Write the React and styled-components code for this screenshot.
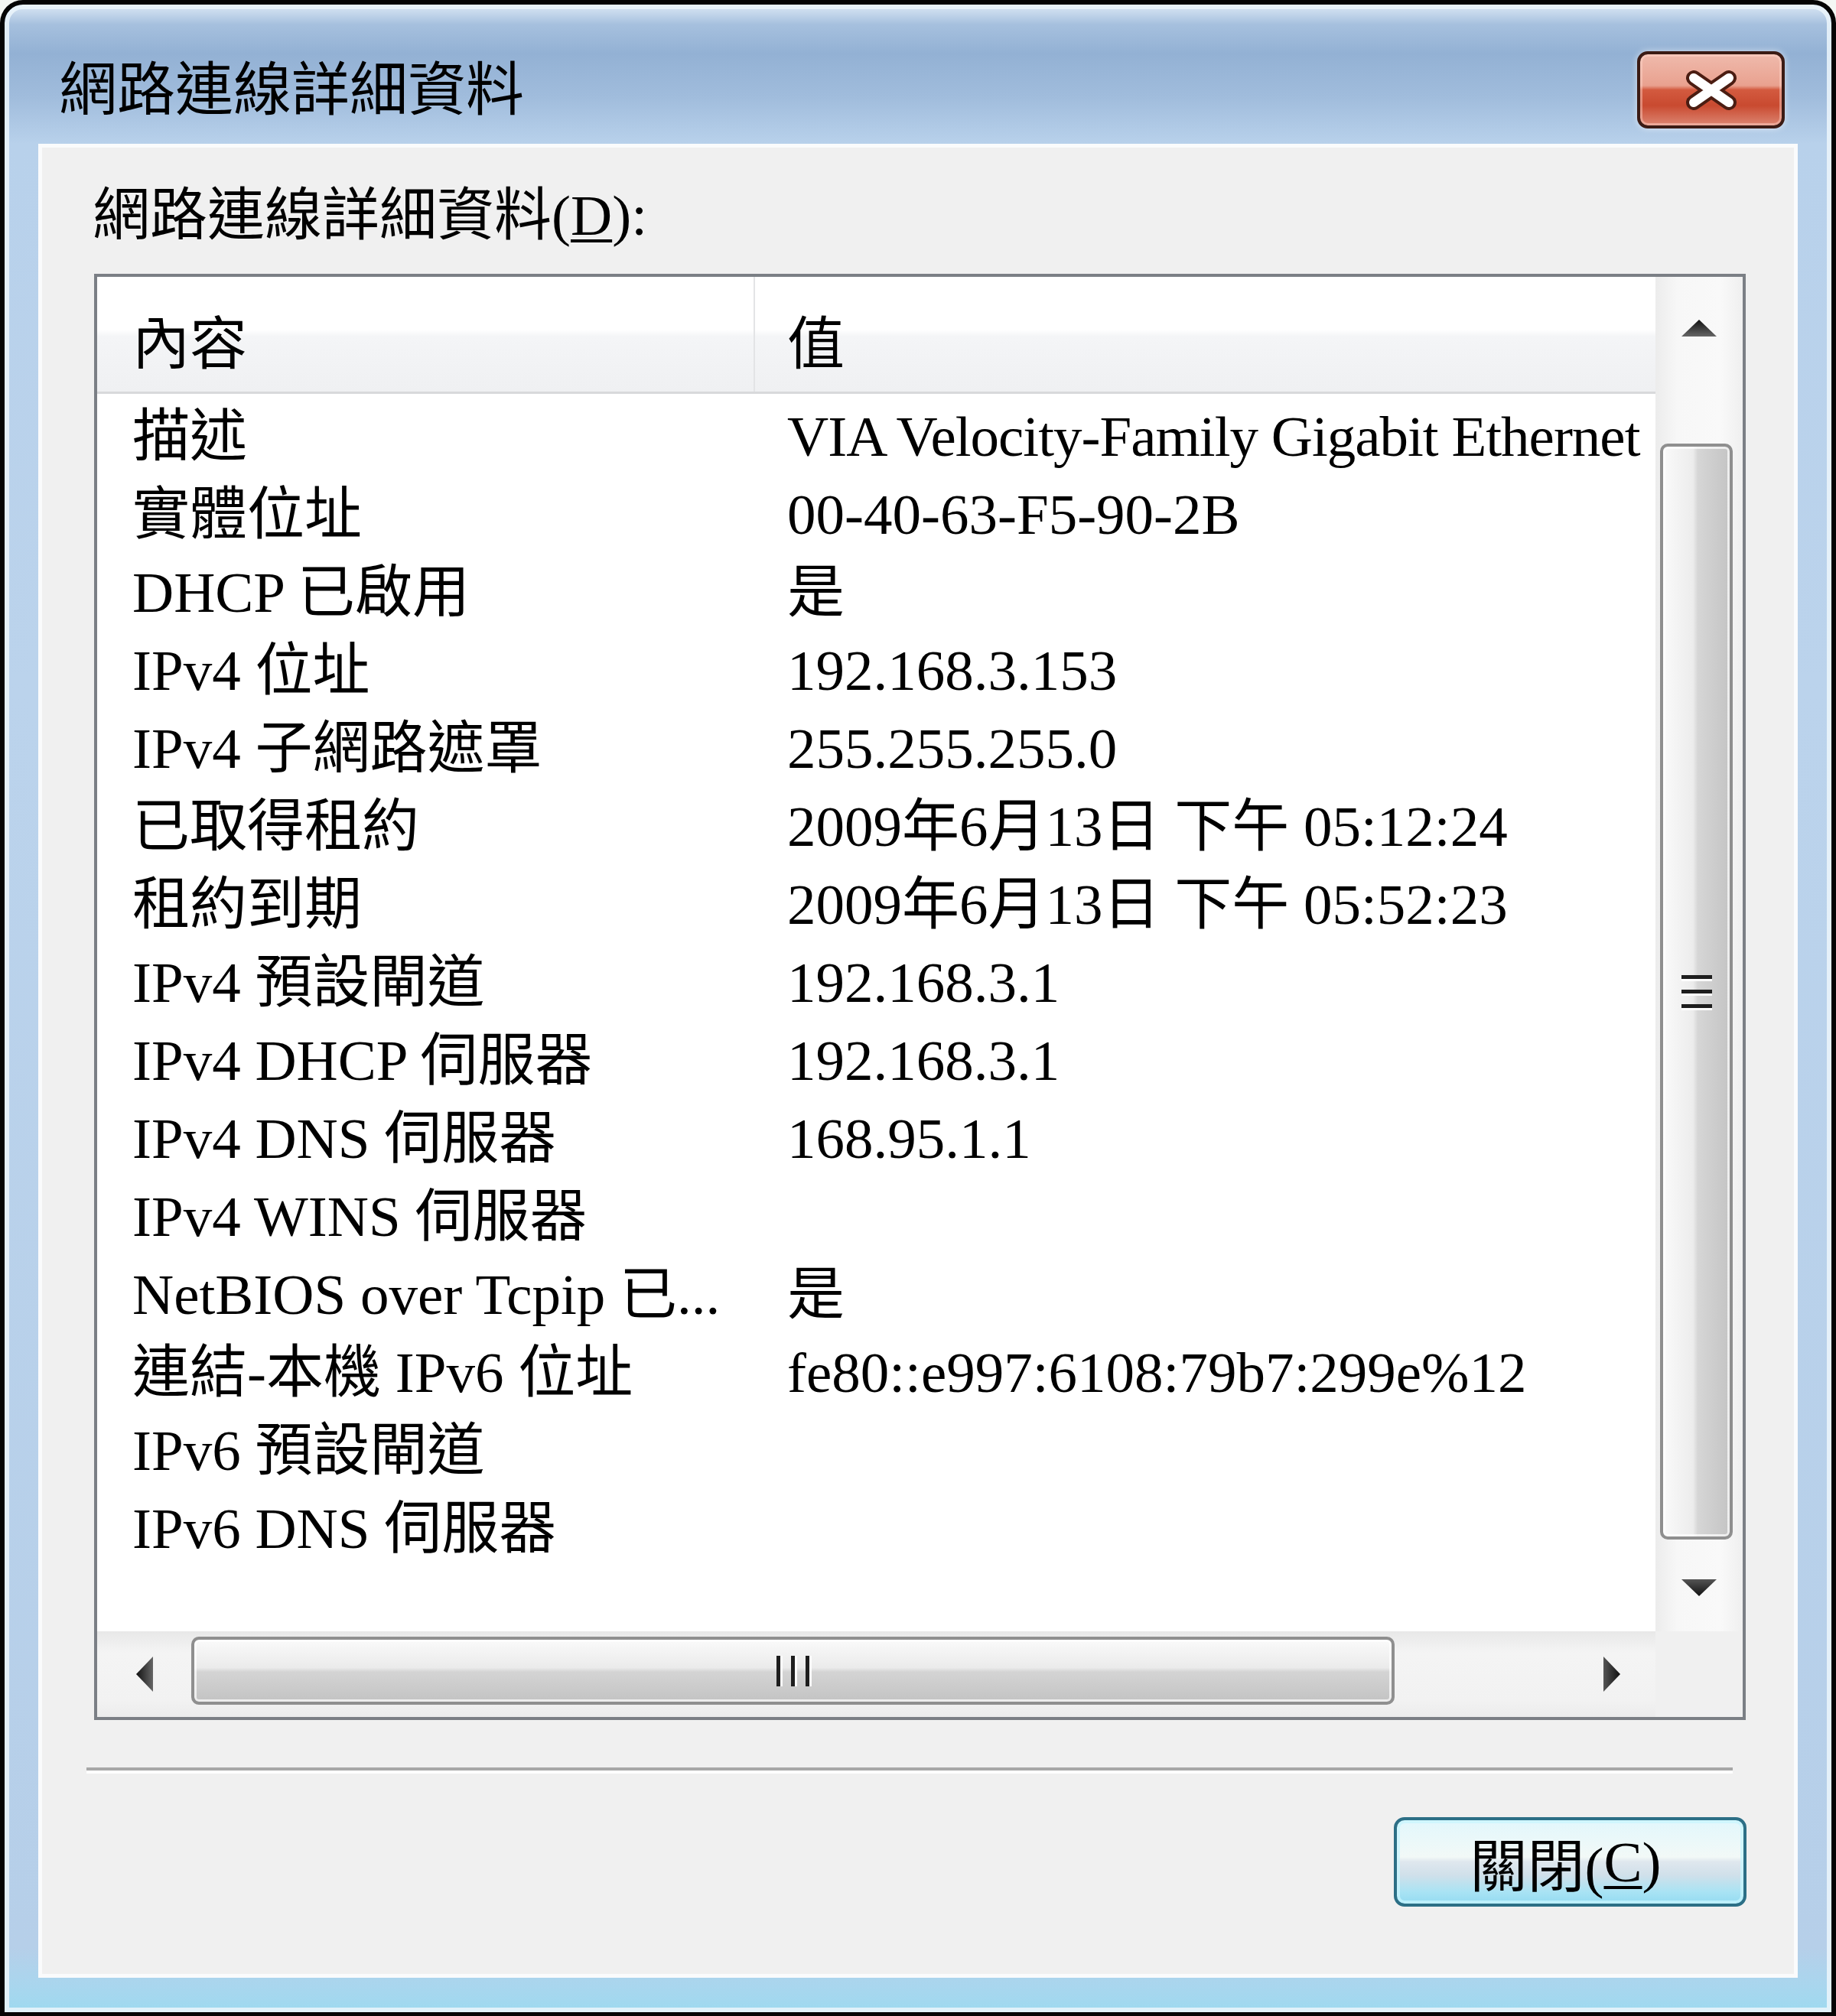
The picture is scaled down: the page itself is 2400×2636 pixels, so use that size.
import React from "react";
import styled, { createGlobalStyle } from "styled-components";

const FONT = `"Liberation Serif", "Noto Sans CJK TC", serif`;

const Global = createGlobalStyle`
  html, body { margin: 0; padding: 0; background: #f4f7f4; }
  body { width: 2400px; height: 2636px; overflow: hidden; }
  #root { width: 2400px; height: 2636px; }
`;

const Window = styled.div`
  box-sizing: border-box;
  width: 2400px;
  height: 2636px;
  display: flex;
  flex-direction: column;
  border: 6px solid #050505;
  border-bottom-width: 5px;
  border-radius: 30px 30px 0 0;
  background: linear-gradient(
    180deg,
    #dbe8f5 0px,
    #a6c0de 26px,
    #93b1d4 64px,
    #a0bcdc 120px,
    #b8d1eb 182px,
    #bbd3ec 900px,
    #b6cfe9 2540px,
    #a9d6ee 2590px,
    #9cdaf0 2631px
  );
  box-shadow: inset 0 0 0 6px rgba(236, 246, 252, 0.85);
  font-family: ${FONT};
  color: #000;
`;

const TitleBar = styled.div`
  flex: none;
  height: 182px;
  display: flex;
  justify-content: space-between;
  align-items: flex-start;
  padding: 0 61px 0 71px;
`;

const Title = styled.div`
  margin-top: 62px;
  font-size: 76px;
  line-height: 100px;
  white-space: nowrap;
`;

const CloseBox = styled.div`
  box-sizing: border-box;
  width: 193px;
  height: 101px;
  margin-top: 61px;
  border: 4px solid #3b1b14;
  border-radius: 14px;
  background: linear-gradient(
    180deg,
    #efbaac 0%,
    #e9a18f 44%,
    #d35a3f 50%,
    #c94a30 72%,
    #dc8571 100%
  );
  box-shadow: inset 0 0 0 3px rgba(255, 215, 205, 0.45), 0 0 8px rgba(255, 255, 255, 0.6);
  display: flex;
  align-items: center;
  justify-content: center;
`;

const Client = styled.div`
  flex: 1;
  margin: 0 44px 45px;
  box-sizing: border-box;
  background: #f0f0f0;
  border: 5px solid #fafbfc;
  display: flex;
  flex-direction: column;
`;

const Label = styled.div`
  height: 100px;
  margin-top: 39px;
  padding-left: 66px;
  font-size: 75px;
  line-height: 100px;
  white-space: nowrap;
`;

const Key = styled.span`
  text-decoration: underline;
  text-decoration-thickness: 4px;
  text-underline-offset: 6px;
`;

const ListBox = styled.div`
  box-sizing: border-box;
  height: 1891px;
  margin: 26px 63px 0 68px;
  border: 4px solid #7b7f85;
  background: #fff;
  display: grid;
  grid-template-columns: 1fr 114px;
  grid-template-rows: 1fr 112px;
  overflow: hidden;
`;

const Pane = styled.div`
  min-width: 0;
  overflow: hidden;
  display: flex;
  flex-direction: column;
`;

const Header = styled.div`
  box-sizing: border-box;
  flex: none;
  height: 153px;
  display: grid;
  grid-template-columns: 860px 1fr;
  border-bottom: 3px solid #d8d9db;
  background: linear-gradient(180deg, #ffffff 0%, #ffffff 46%, #f4f5f7 52%, #eff0f2 100%);
`;

const HeadCell = styled.div`
  box-sizing: border-box;
  display: flex;
  align-items: center;
  padding-top: 12px;
  padding-left: ${(p) => (p.$first ? "46px" : "42px")};
  border-right: ${(p) => (p.$first ? "2px solid #e3e4e6" : "none")};
  font-size: 75px;
  white-space: nowrap;
`;

const Rows = styled.div`
  padding-top: 5px;
`;

const Row = styled.div`
  height: 102px;
  display: grid;
  grid-template-columns: 860px 1fr;
  align-items: center;
`;

const Cell = styled.div`
  min-width: 0;
  padding-left: ${(p) => (p.$first ? "46px" : "42px")};
  font-size: 75px;
  line-height: 102px;
  letter-spacing: ${(p) => (p.$tight ? "-1px" : "0")};
  white-space: nowrap;
`;

const VScroll = styled.div`
  display: flex;
  flex-direction: column;
  background: linear-gradient(90deg, #ececec 0%, #f7f7f7 25%, #f9f9f9 75%, #efefef 100%);
`;

const ArrowBtn = styled.div`
  flex: none;
  display: flex;
  align-items: center;
  justify-content: center;
  ${(p) => (p.$h ? `height: ${p.$h}px;` : "")}
  ${(p) => (p.$w ? `width: ${p.$w}px;` : "")}
`;

const VTrack = styled.div`
  flex: 1;
  display: flex;
  padding: 84px 13px 6px 6px;
`;

const Thumb = styled.div`
  flex: 1;
  box-sizing: border-box;
  border: 4px solid #8f8f8f;
  border-radius: 10px;
  display: flex;
  align-items: center;
  justify-content: center;
  background: ${(p) =>
    p.$vertical
      ? "linear-gradient(90deg, #fafafa 0%, #ececec 45%, #d6d6d6 52%, #c4c4c4 100%)"
      : "linear-gradient(180deg, #fafafa 0%, #ebebeb 45%, #d4d4d4 52%, #c3c3c3 100%)"};
  box-shadow: inset 0 0 0 3px rgba(255, 255, 255, 0.7);
`;

const Grip = styled.div`
  display: flex;
  flex-direction: ${(p) => (p.$vertical ? "column" : "row")};
  gap: 14px;
`;

const GripLine = styled.div`
  background: #1e1e1e;
  ${(p) =>
    p.$vertical
      ? "width: 40px; height: 5px; box-shadow: 0 3px 0 rgba(255,255,255,0.9);"
      : "width: 5px; height: 40px; box-shadow: 3px 0 0 rgba(255,255,255,0.9);"}
`;

const HScroll = styled.div`
  display: flex;
  background: linear-gradient(180deg, #e8e8e8 0%, #f4f4f4 25%, #f2f2f2 80%, #ececec 100%);
`;

const HTrack = styled.div`
  flex: 1;
  display: flex;
  padding: 7px 0 16px;
`;

const HThumb = styled(Thumb)`
  flex: none;
  width: 1573px;
`;

const Corner = styled.div`
  background: #f0f0f0;
`;

const Separator = styled.div`
  height: 0;
  margin: 62px 80px 0 58px;
  border-top: 4px solid #a7a7a7;
  border-bottom: 4px solid #ffffff;
`;

const ButtonRow = styled.div`
  display: flex;
  justify-content: flex-end;
  margin-top: 57px;
  padding-right: 62px;
`;

const Button = styled.div`
  box-sizing: border-box;
  width: 461px;
  height: 117px;
  border: 4px solid #2c6f86;
  border-radius: 14px;
  background: linear-gradient(
    180deg,
    #e2f7fc 0%,
    #f2f9f7 44%,
    #dfe7ee 50%,
    #d0e0ea 66%,
    #a9e3f4 86%,
    #94dbf1 100%
  );
  box-shadow: inset 0 0 0 4px rgba(200, 245, 255, 0.75);
  display: flex;
  align-items: center;
  justify-content: center;
  font-size: 75px;
  white-space: nowrap;
  padding-right: 12px;
`;

const rows = [
  ["描述", "VIA Velocity-Family Gigabit Ethernet", true],
  ["實體位址", "00-40-63-F5-90-2B"],
  ["DHCP 已啟用", "是"],
  ["IPv4 位址", "192.168.3.153"],
  ["IPv4 子網路遮罩", "255.255.255.0"],
  ["已取得租約", "2009年6月13日 下午 05:12:24"],
  ["租約到期", "2009年6月13日 下午 05:52:23"],
  ["IPv4 預設閘道", "192.168.3.1"],
  ["IPv4 DHCP 伺服器", "192.168.3.1"],
  ["IPv4 DNS 伺服器", "168.95.1.1"],
  ["IPv4 WINS 伺服器", ""],
  ["NetBIOS over Tcpip 已...", "是"],
  ["連結-本機 IPv6 位址", "fe80::e997:6108:79b7:299e%12"],
  ["IPv6 預設閘道", ""],
  ["IPv6 DNS 伺服器", ""],
];

const Tri = ({ dir }) => {
  const pts = {
    up: "0,22 23,0 46,22",
    down: "0,0 46,0 23,22",
    left: "22,0 22,46 0,23",
    right: "0,0 22,23 0,46",
  }[dir];
  const vertical = dir === "up" || dir === "down";
  const w = vertical ? 46 : 22;
  const h = vertical ? 22 : 46;
  return (
    <svg width={w} height={h} viewBox={`0 0 ${w} ${h}`}>
      <defs>
        <linearGradient id={`g-${dir}`} x1="0" y1="0" x2={vertical ? "0" : "1"} y2={vertical ? "1" : "0"}>
          <stop offset="0" stopColor={dir === "up" || dir === "left" ? "#111" : "#555"} />
          <stop offset="1" stopColor={dir === "up" || dir === "left" ? "#666" : "#111"} />
        </linearGradient>
      </defs>
      <polygon points={pts} fill={`url(#g-${dir})`} />
    </svg>
  );
};

const CloseX = () => (
  <svg width="74" height="52" viewBox="0 0 74 52">
    <path d="M14 10 L60 42 M60 10 L14 42" stroke="#4b1d12" strokeWidth="20" strokeLinecap="round" />
    <path d="M14 10 L60 42 M60 10 L14 42" stroke="#ffffff" strokeWidth="12" strokeLinecap="round" />
  </svg>
);

export default function App() {
  return (
    <>
      <Global />
      <Window>
        <TitleBar>
          <Title>網路連線詳細資料</Title>
          <CloseBox>
            <CloseX />
          </CloseBox>
        </TitleBar>
        <Client>
          <Label>
            網路連線詳細資料(<Key>D</Key>):
          </Label>
          <ListBox>
            <Pane>
              <Header>
                <HeadCell $first>內容</HeadCell>
                <HeadCell>值</HeadCell>
              </Header>
              <Rows>
                {rows.map(([k, v, tight]) => (
                  <Row key={k}>
                    <Cell $first>{k}</Cell>
                    <Cell $tight={tight}>{v}</Cell>
                  </Row>
                ))}
              </Rows>
            </Pane>
            <VScroll>
              <ArrowBtn $h={134}>
                <Tri dir="up" />
              </ArrowBtn>
              <VTrack>
                <Thumb $vertical>
                  <Grip $vertical>
                    <GripLine $vertical />
                    <GripLine $vertical />
                    <GripLine $vertical />
                  </Grip>
                </Thumb>
              </VTrack>
              <ArrowBtn $h={114}>
                <Tri dir="down" />
              </ArrowBtn>
            </VScroll>
            <HScroll>
              <ArrowBtn $w={123}>
                <Tri dir="left" />
              </ArrowBtn>
              <HTrack>
                <HThumb>
                  <Grip>
                    <GripLine />
                    <GripLine />
                    <GripLine />
                  </Grip>
                </HThumb>
              </HTrack>
              <ArrowBtn $w={114}>
                <Tri dir="right" />
              </ArrowBtn>
            </HScroll>
            <Corner />
          </ListBox>
          <Separator />
          <ButtonRow>
            <Button>
              關閉(<Key>C</Key>)
            </Button>
          </ButtonRow>
        </Client>
      </Window>
    </>
  );
}
